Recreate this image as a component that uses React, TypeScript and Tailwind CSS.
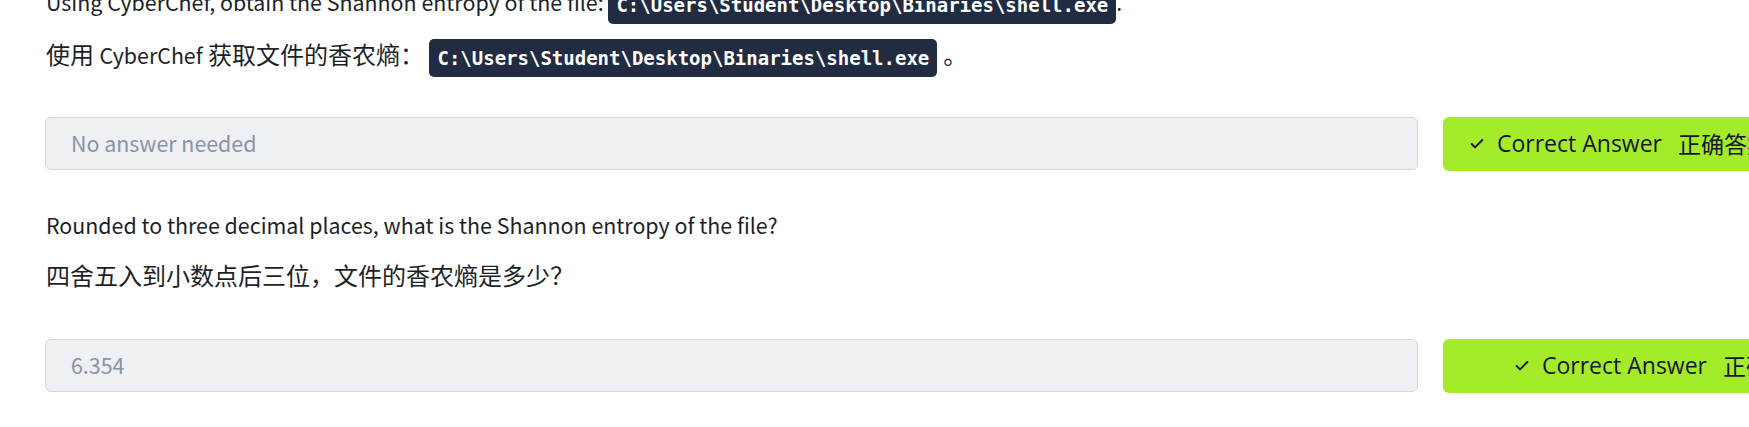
import React from "react";

const body = { fontFamily: '"Noto Sans CJK SC", "Noto Sans", sans-serif' };
const mono = { fontFamily: '"DejaVu Sans Mono", "Liberation Mono", monospace' };
const btnFont = { fontFamily: '"Open Sans", "Noto Sans CJK SC", sans-serif' };

function Code({ children }: { children: React.ReactNode }) {
  return (
    <code
      style={mono}
      className="inline-block rounded-[5px] bg-[#212c42] px-[8px] text-[19px] font-bold leading-[38px] text-white align-middle"
    >
      {children}
    </code>
  );
}

function Check() {
  return (
    <svg width="16" height="16" viewBox="0 0 24 24" fill="none" stroke="currentColor" strokeWidth="3" strokeLinecap="round" strokeLinejoin="round">
      <path d="M20 6 9 17l-5-5" />
    </svg>
  );
}

function AnswerRow({ value, pad }: { value: string; pad: string }) {
  return (
    <div className="flex flex-row gap-[25px]">
      <div
        style={body}
        className="flex h-[53px] w-[1373px] flex-none items-center rounded-[6px] border border-[#d3d7de] bg-[#eef0f4] pl-[25px] text-[21.4px] text-[#8a93a6]"
      >
        {value}
      </div>
      <div
        style={btnFont}
        className={`flex h-[54px] w-[420px] flex-none items-center gap-[12px] whitespace-nowrap rounded-[6px] bg-[#a4eb2a] text-[23px] text-[#141727] ${pad}`}
      >
        <Check />
        <span>Correct Answer</span>
        <span style={body} className="ml-[4px]">正确答案</span>
      </div>
    </div>
  );
}

export default function App() {
  return (
    <div className="h-[427px] w-full overflow-hidden bg-white">
      <div style={body} className="-mt-[17px] pl-[46px] text-[24px] text-[#1c1f28]">
        <p className="mb-[11px] leading-[38px] text-[21.4px]">
          Using CyberChef, obtain the Shannon entropy of the file: <Code>C:\Users\Student\Desktop\Binaries\shell.exe</Code>.
        </p>
        <p className="mb-[40px] leading-[38px]">
          使用 <span className="text-[21.4px]">CyberChef</span> 获取文件的香农熵： <Code>C:\Users\Student\Desktop\Binaries\shell.exe</Code>
          <span className="ml-[6px]">。</span>
        </p>
        <div className="-ml-[1px]">
          <AnswerRow value="No answer needed" pad="pl-[26px]" />
        </div>
        <p className="mt-[36px] mb-[14px] leading-[36px] text-[21.4px]">
          Rounded to three decimal places, what is the Shannon entropy of the file?
        </p>
        <p className="mb-[46px] leading-[36px]">四舍五入到小数点后三位，文件的香农熵是多少？</p>
        <div className="-ml-[1px]">
          <AnswerRow value="6.354" pad="pl-[71px]" />
        </div>
      </div>
    </div>
  );
}
